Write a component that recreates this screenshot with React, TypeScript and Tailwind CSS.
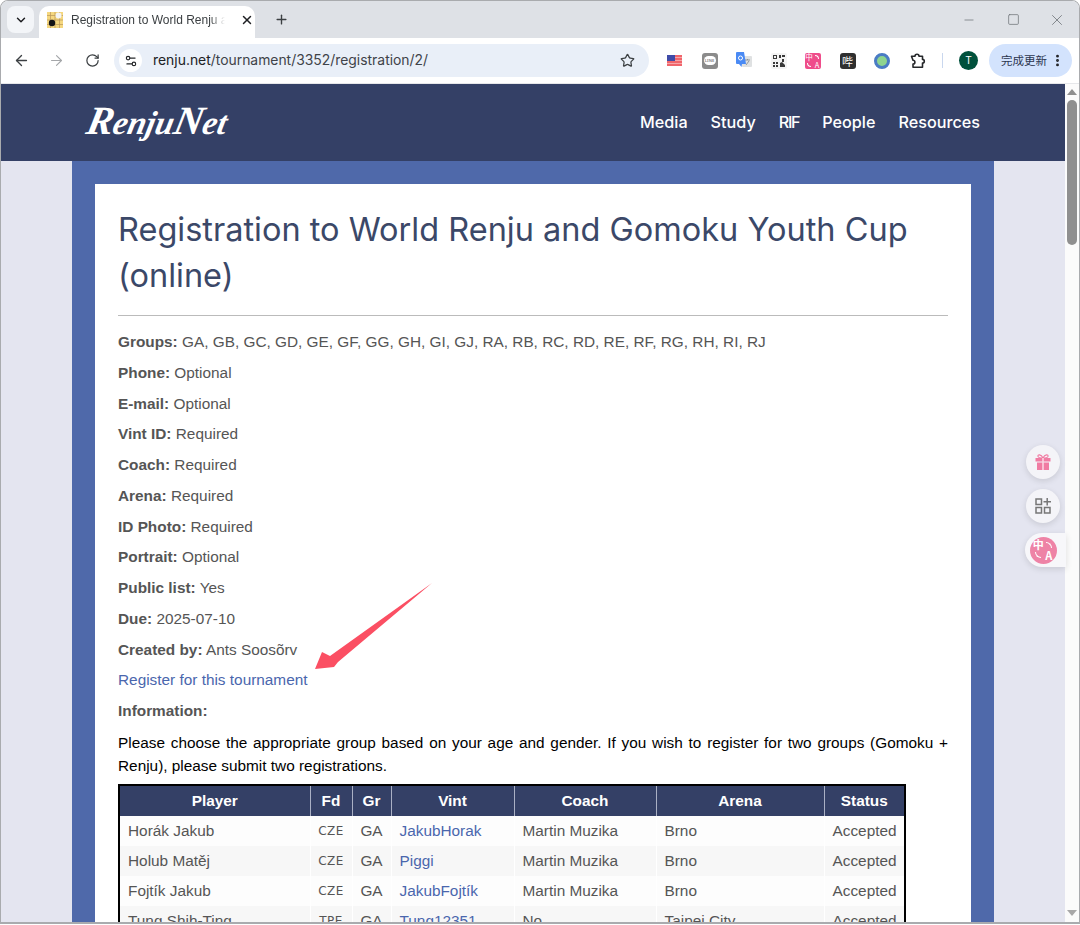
import {
  ArrowLeft,
  ArrowRight,
  ChevronDown,
  EllipsisVertical,
  Minus,
  Plus,
  RotateCw,
  Settings2,
  Square,
  Star,
  X,
} from "lucide-react";

const sans = "font-['Liberation_Sans',Arial,sans-serif]";
const display = "font-['Inter','Noto_Sans',sans-serif]";
const cjk = "font-['Noto_Sans_CJK_SC',sans-serif]";

const infoRows = [
  ["Groups:", "GA, GB, GC, GD, GE, GF, GG, GH, GI, GJ, RA, RB, RC, RD, RE, RF, RG, RH, RI, RJ"],
  ["Phone:", "Optional"],
  ["E-mail:", "Optional"],
  ["Vint ID:", "Required"],
  ["Coach:", "Required"],
  ["Arena:", "Required"],
  ["ID Photo:", "Required"],
  ["Portrait:", "Optional"],
  ["Public list:", "Yes"],
  ["Due:", "2025-07-10"],
  ["Created by:", "Ants Soosõrv"],
];

const players = [
  ["Horák Jakub", "CZE", "GA", "JakubHorak", "Martin Muzika", "Brno", "Accepted"],
  ["Holub Matěj", "CZE", "GA", "Piggi", "Martin Muzika", "Brno", "Accepted"],
  ["Fojtík Jakub", "CZE", "GA", "JakubFojtík", "Martin Muzika", "Brno", "Accepted"],
  ["Tung,Shih-Ting", "TPE", "GA", "Tung12351", "No", "Taipei City", "Accepted"],
];

const columns = [
  ["Player", "w-[191px]"],
  ["Fd", "w-[42px]"],
  ["Gr", "w-[39px]"],
  ["Vint", "w-[123px]"],
  ["Coach", "w-[142px]"],
  ["Arena", "w-[168px]"],
  ["Status", "w-[81px]"],
];

function Favicon() {
  return (
    <svg width="16" height="16" viewBox="0 0 16 16" className="shrink-0">
      <rect width="16" height="16" fill="#f5d77f" />
      <path d="M0 3.5h16M0 8h16M0 12.5h16M3.5 0v16M8 0v16M12.5 0v16" stroke="#b9975a" strokeWidth="0.7" />
      <circle cx="11.5" cy="3.5" r="3" fill="#f4f4f4" />
      <circle cx="5" cy="11" r="3.2" fill="#151515" />
    </svg>
  );
}

function Extensions() {
  return (
    <div className="flex items-center">
      <div className="w-[35px] flex justify-center">
        <svg width="15" height="11" viewBox="0 0 15 11">
          <rect width="15" height="11" fill="#f0656b" />
          <path d="M0 2.5h15M0 5.5h15M0 8.5h15" stroke="#f9b6b8" strokeWidth="0.8" />
          <rect width="8" height="6" fill="#3f4ba8" />
        </svg>
      </div>
      <div className="w-[35px] flex justify-center">
        <div className="w-[16px] h-[16px] rounded-[3px] bg-[#8b8b8b] flex items-center justify-center">
          <div className="w-[12px] h-[9px] rounded-full bg-white text-[#8b8b8b] text-[4px] leading-[9px] text-center font-bold">LINE</div>
        </div>
      </div>
      <div className="w-[34px] flex justify-center">
        <svg width="16" height="17" viewBox="0 0 16 17">
          <rect x="6" y="4" width="10" height="11" rx="1" fill="#dfe1e2" />
          <path d="M9 8h5M11.5 7v1M10 13l3-4" stroke="#8a8f92" strokeWidth="0.9" fill="none" />
          <path d="M1 0h7l2 12H6l-.5 3L3 12H1a1 1 0 0 1-1-1V1a1 1 0 0 1 1-1z" fill="#4a8af4" />
          <circle cx="4.5" cy="6" r="2" fill="none" stroke="#fff" strokeWidth="1" />
        </svg>
      </div>
      <div className="w-[35px] flex justify-center">
        <svg width="16" height="16" viewBox="0 0 16 16">
          <rect width="16" height="16" rx="2" fill="#f4f4f4" />
          <path d="M2 2h1v4H2zM3 2h3v1H3zM3 5h3v1H3zM5 3h1v2H5zM2 9h2v2H2zM5 9h2v2H5zM8 2h2v3H8zM11 2h3v2h-3zM11 6h2v3h-2zM9 10l2-1 3 3v2H9zM2 12h2v2H2zM5 12h2v2H5z" fill="#3a3a3a" />
        </svg>
      </div>
      <div className="w-[34px] flex justify-center">
        <div className={`w-[16px] h-[16px] rounded-[2px] bg-[#ef4d8b] grid grid-cols-2 grid-rows-2 place-items-center text-white text-[7.5px] leading-[8px] ${cjk}`}>
          <span>中</span>
          <span className="w-[4px] h-[4px] border-t border-r border-white rounded-tr-full" />
          <span className="w-[4px] h-[4px] border-b border-l border-white rounded-bl-full" />
          <span>A</span>
        </div>
      </div>
      <div className="w-[35px] flex justify-center">
        <div className={`w-[16px] h-[16px] rounded-[3px] bg-[#2f2f2f] flex items-center justify-center text-white text-[11px] leading-[16px] ${cjk}`}>
          哔
        </div>
      </div>
      <div className="w-[34px] flex justify-center">
        <div className="w-[16px] h-[16px] rounded-full bg-[#8ed58f] border-[3px] border-[#4a7cc4]" />
      </div>
      <div className="w-[37px] flex justify-center">
        <svg width="17" height="17" viewBox="0 0 17 17" fill="none" stroke="#26282b" strokeWidth="1.6" strokeLinejoin="round">
          <path d="M2.5 4.2H6a2 2 0 0 1 4 0h3.5v3.2a1.8 1.8 0 0 1 0 3.6v4.3H4v-3.2a1.9 1.9 0 0 0 0-3.8z" />
        </svg>
      </div>
    </div>
  );
}

function BrowserChrome() {
  return (
    <div className="shrink-0">
      <div className="h-[37px] bg-[#dee1e6] flex items-end pl-[6px]">
        <div className="w-[27px] h-[27px] mb-[5px] rounded-[8px] bg-[#f3f5f8] flex items-center justify-center">
          <ChevronDown size={14} strokeWidth={2.5} color="#1f2023" />
        </div>
        <div className={`ml-[5px] w-[216px] h-[32px] bg-white rounded-t-[10px] flex items-center pl-[8px] pr-[1px] pb-[4px] gap-[8px] ${sans}`}>
          <Favicon />
          <span className="w-[154px] overflow-hidden whitespace-nowrap text-[12px] text-[#3c4043] [mask-image:linear-gradient(to_right,black_90%,transparent)]">
            Registration to World Renju and Gomoku
          </span>
          <X size={14} strokeWidth={2.5} color="#1f2023" className="ml-auto" />
        </div>
        <div className="ml-[19px] mb-[11px] flex items-center">
          <Plus size={15} strokeWidth={2.2} color="#3c4043" />
        </div>
        <div className="ml-auto flex items-center h-[37px]">
          <div className="w-[44px] flex justify-center">
            <Minus size={14} strokeWidth={1.3} color="#70757a" />
          </div>
          <div className="w-[44px] flex justify-center">
            <Square size={13} strokeWidth={1.4} color="#70757a" />
          </div>
          <div className="w-[44px] flex justify-center">
            <X size={18} strokeWidth={1.1} color="#70757a" />
          </div>
        </div>
      </div>
      <div className="h-[46px] bg-white flex items-center pl-[12px] border-b border-[#e6e7ea]">
        <ArrowLeft size={17} strokeWidth={1.9} color="#3c4043" />
        <ArrowRight size={17} strokeWidth={1.6} color="#a5a7aa" className="ml-[18px]" />
        <RotateCw size={15} strokeWidth={2} color="#3c4043" className="ml-[20px]" />
        <div className="ml-[14px] w-[535px] shrink-0 h-[33px] rounded-full bg-[#e9eff8] flex items-center pl-[5px] pr-[14px]">
          <div className="w-[23px] h-[23px] rounded-full bg-white flex items-center justify-center">
            <Settings2 size={14} strokeWidth={2} color="#26282b" />
          </div>
          <span className={`ml-[11px] text-[13.9px] text-[#202124] ${display}`}>
            renju.net<span className="text-[#3f4349]">/tournament/3352/registration/2/</span>
          </span>
          <Star size={15} strokeWidth={2} color="#3c4043" className="ml-auto" />
        </div>
        <div className="ml-[8px]">
          <Extensions />
        </div>
        <div className="ml-[6px] w-[1px] h-[15px] bg-[#c9d7ee]" />
        <div className={`ml-[16px] w-[19px] h-[19px] rounded-full bg-[#00513c] text-white text-[10px] flex items-center justify-center ${sans}`}>
          T
        </div>
        <div className={`ml-[11px] w-[83px] h-[33px] shrink-0 rounded-full bg-[#d3e3fd] flex items-center pl-[12px] text-[#2c3650] text-[11.5px] ${cjk}`}>
          完成更新
          <EllipsisVertical size={15} strokeWidth={2.6} color="#202124" className="ml-[3px]" />
        </div>
      </div>
    </div>
  );
}

function SiteHeader() {
  return (
    <header className="h-[77px] shrink-0 bg-[#344066] flex items-center justify-between pl-[86px] pr-[85px]">
      <div className="text-white text-[33px] leading-none italic font-bold -skew-x-12 pb-[4px] font-['Liberation_Serif',serif]">
        <span className="text-[40px]">R</span>enju<span className="text-[40px]">N</span>et
      </div>
      <nav className={`flex gap-[23px] text-white text-[16.2px] font-medium ${display}`}>
        <span>Media</span>
        <span>Study</span>
        <span className="tracking-[-1.3px]">RIF</span>
        <span>People</span>
        <span>Resources</span>
      </nav>
    </header>
  );
}

function PlayersTable() {
  return (
    <table className="mt-[7px] w-[788px] table-fixed border-collapse border-2 border-black text-[15.36px] leading-[30px] text-[#555]">
      <thead>
        <tr className="bg-[#344066] text-white h-[31px]">
          {columns.map(([name, width]) => (
            <th key={name} className={`${width} font-bold text-center p-0 border-l border-[#aab0c4] first:border-l-0`}>
              {name}
            </th>
          ))}
        </tr>
      </thead>
      <tbody>
        {players.map((row, i) => (
          <tr key={row[0]} className={i % 2 ? "bg-[#f7f7f7]" : "bg-[#fdfdfd]"}>
            {row.map((cell, j) => (
              <td
                key={j}
                className={`h-[30px] p-0 whitespace-nowrap border-l border-white first:border-l-0 ${
                  j === 1 ? "text-center text-[12px] tracking-[0.5px] font-['DejaVu_Sans',sans-serif]" : j === 2 ? "text-center" : "pl-[8px]"
                } ${j === 3 ? "text-[#4a66ad]" : ""}`}
              >
                {cell}
              </td>
            ))}
          </tr>
        ))}
      </tbody>
    </table>
  );
}

function Arrow() {
  return (
    <svg width="120" height="90" viewBox="0 0 120 90" className="absolute left-[315px] top-[582px]">
      <polygon points="0,87 7,70 15,74 117,1 23,80 19,85" fill="#fb4f63" />
    </svg>
  );
}

function FloatingTools() {
  return (
    <div className="absolute left-[1025px] top-[445px] flex flex-col items-start gap-[10px]">
      <div className="ml-[1px] w-[34px] h-[34px] rounded-full bg-[#f4f4f8] shadow-[0_2px_6px_rgba(0,0,0,0.12)] flex items-center justify-center">
        <svg width="18" height="18" viewBox="0 0 18 18">
          <path d="M9 5C7 1 3.5 1 4 3.5 4.3 5 7 5 9 5c2 0 4.7 0 5-1.5C14.500 1 11 1 9 5z" fill="none" stroke="#f07ca3" strokeWidth="1.2" />
          <rect x="1.5" y="5" width="15" height="3.5" fill="#f07ca3" />
          <rect x="3" y="9.5" width="12" height="7.5" fill="#f07ca3" />
          <path d="M9 5v12" stroke="#fbd5e2" strokeWidth="1.6" />
        </svg>
      </div>
      <div className="ml-[1px] w-[34px] h-[34px] rounded-full bg-[#f4f4f8] shadow-[0_2px_6px_rgba(0,0,0,0.12)] flex items-center justify-center">
        <svg width="18" height="18" viewBox="0 0 18 18" fill="none" stroke="#777" strokeWidth="1.5">
          <rect x="2" y="2" width="5.5" height="5.5" />
          <rect x="2" y="10.5" width="5.5" height="5.5" />
          <rect x="10.5" y="10.5" width="5.5" height="5.5" />
          <path d="M13.2 1v7.5M9.5 4.7h7.5" />
        </svg>
      </div>
      <div className="w-[41px] h-[34px] rounded-l-full bg-[#f7f7fa] shadow-[0_2px_6px_rgba(0,0,0,0.12)] flex items-center pl-[5px]">
        <div className={`w-[27px] h-[27px] rounded-full bg-[#ee83a6] text-white text-[11px] leading-[11px] font-bold grid grid-cols-2 grid-rows-2 place-items-center p-[3px] ${cjk}`}>
          <span>中</span>
          <span className="w-[6px] h-[6px] border-t border-r border-white rounded-tr-full" />
          <span className="w-[6px] h-[6px] border-b border-l border-white rounded-bl-full" />
          <span>A</span>
        </div>
      </div>
    </div>
  );
}

function Scrollbar() {
  return (
    <div className="w-[14px] shrink-0 bg-[#fbfbfb] flex flex-col items-center pt-[5px]">
      <div className="w-0 h-0 border-x-[5px] border-x-transparent border-b-[6px] border-b-[#8f8f8f]" />
      <div className="mt-[5px] w-[10px] h-[145px] rounded-full bg-[#8f8f8f]" />
      <div className="mt-auto mb-[6px] w-0 h-0 border-x-[5px] border-x-transparent border-t-[6px] border-t-[#a8a8a8]" />
    </div>
  );
}

export default function App() {
  return (
    <div className="relative w-[1080px] h-[925px] overflow-hidden bg-white">
      <div className="h-[924px] flex flex-col overflow-hidden rounded-t-[8px] border border-[#a9abae] border-b-2">
        <BrowserChrome />
        <div className="flex flex-1 min-h-0">
          <div className="flex-1 min-w-0 flex flex-col bg-[#e4e5f0]">
            <SiteHeader />
            <div className="flex-1 min-h-0 ml-[71px] w-[922px] bg-[#4f69aa] pt-[23px] px-[23px] overflow-hidden">
              <main className={`bg-white h-[900px] px-[23px] pt-[23px] ${sans}`}>
                <h1 className={`text-[32.5px] leading-[46px] text-[#3b4868] ${display}`}>
                  Registration to World Renju and Gomoku Youth Cup (online)
                </h1>
                <hr className="mt-[16px] border-[#bbb]" />
                <div className="mt-[11px] text-[15.36px] leading-[30.75px] text-[#555]">
                  {infoRows.map(([label, value]) => (
                    <div key={label}>
                      <b>{label}</b> {value}
                    </div>
                  ))}
                  <div className="text-[#4a66ad]">Register for this tournament</div>
                  <div>
                    <b>Information:</b>
                  </div>
                </div>
                <p className="mt-[4px] text-[15.36px] leading-[23px] text-black text-justify">
                  Please choose the appropriate group based on your age and gender. If you wish to register for two groups (Gomoku + Renju), please submit two registrations.
                </p>
                <PlayersTable />
              </main>
            </div>
          </div>
          <Scrollbar />
        </div>
      </div>
      <Arrow />
      <FloatingTools />
    </div>
  );
}
